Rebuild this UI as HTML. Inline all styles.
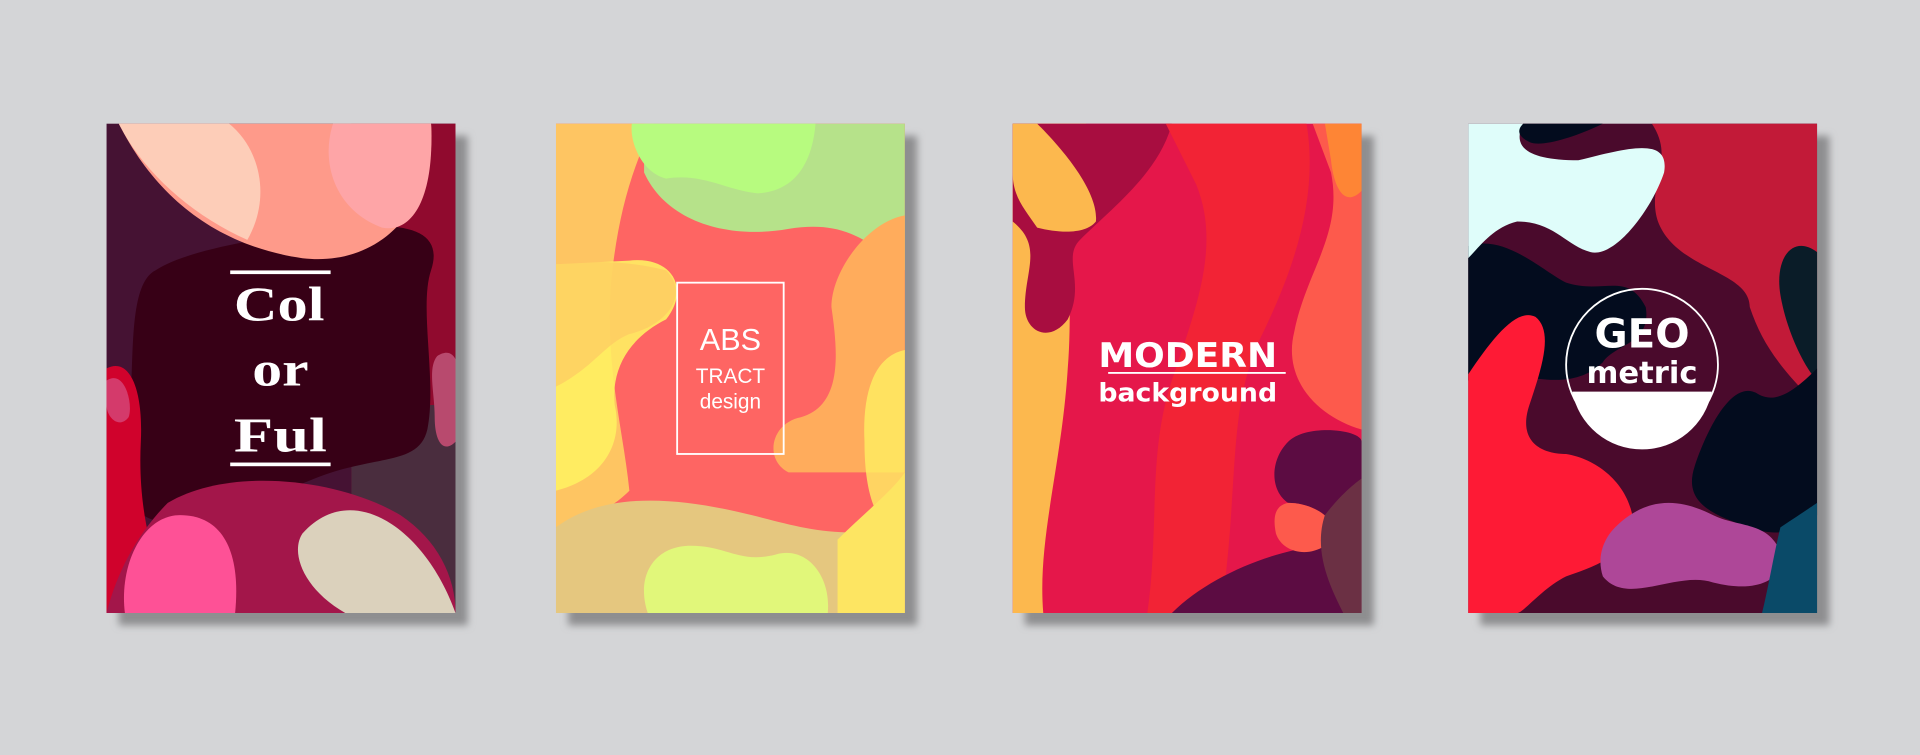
<!DOCTYPE html>
<html><head><meta charset="utf-8"><style>
html,body{margin:0;padding:0;background:#d4d5d7;overflow:hidden}
svg{display:block}
</style></head><body>
<svg width="1920" height="755" viewBox="0 0 1568 617" preserveAspectRatio="none" xmlns="http://www.w3.org/2000/svg">
<defs>
<filter id="b" x="-20%" y="-20%" width="140%" height="140%"><feGaussianBlur stdDeviation="3"/></filter>
<clipPath id="c"><rect x="0" y="0" width="285" height="400"/></clipPath>
</defs>
<rect width="1568" height="617" fill="#d4d5d7"/>
<g fill="#8e8e90" filter="url(#b)">
<rect x="97" y="111" width="285" height="400"/>
<rect x="464" y="111" width="285" height="400"/>
<rect x="837" y="111" width="285" height="400"/>
<rect x="1209" y="111" width="285" height="400"/>
</g>

<!-- Card 1 -->
<g transform="translate(87,101)" clip-path="url(#c)">
<rect width="285" height="400" fill="#451233"/>
<rect x="200" width="85" height="400" fill="#900a2e"/>
<rect x="200" y="230" width="85" height="170" fill="#4a2d3e"/>
<path d="M40 120 C20 130,22 180,20 220 C18 260,10 300,30 320 C60 340,120 310,170 290 C220 270,255 280,262 250 C270 210,255 150,265 120 C275 90,250 80,200 85 C150 90,70 100,40 120Z" fill="#370016"/>
<path d="M0 200 C20 190,30 220,28 260 C25 320,40 370,60 400 L0 400Z" fill="#d0022c"/>
<path d="M0 210 C15 200,22 230,18 240 C10 250,0 240,0 230Z" fill="#d43a6b"/>
<path d="M270 190 C285 180,290 200,285 210 L285 260 C275 270,268 260,268 240 C268 220,262 200,270 190Z" fill="#b84a6e"/>
<path d="M50 310 C100 280,190 290,240 320 C270 340,285 370,285 400 L0 400 C10 360,30 330,50 310Z" fill="#a3164a"/>
<path d="M15 400 C10 360,30 320,60 320 C95 320,110 350,105 400Z" fill="#fe5196"/>
<path d="M160 335 C200 290,260 330,285 400 L195 400 C160 380,150 350,160 335Z" fill="#dbd1bc"/>
<path d="M10 0 C40 60,90 100,160 110 C230 118,270 60,265 0Z" fill="#fe9a8a"/>
<path d="M10 0 C30 40,70 75,115 95 C135 60,125 20,100 0Z" fill="#fdcdb8"/>
<path d="M185 0 C175 30,185 70,225 85 C250 90,268 60,265 0Z" fill="#fea5a7"/>
<rect x="101" y="120" width="82" height="3" fill="#fff"/>
<rect x="101" y="277" width="82" height="3" fill="#fff"/>
<g font-family="Liberation Serif,DejaVu Serif,serif" font-weight="bold" fill="#fff" font-size="40">
<text x="104" y="161" textLength="74" lengthAdjust="spacingAndGlyphs">Col</text>
<text x="119" y="214" textLength="46" lengthAdjust="spacingAndGlyphs">or</text>
<text x="104" y="268" textLength="76" lengthAdjust="spacingAndGlyphs">Ful</text>
</g>
</g>

<!-- Card 2 -->
<g transform="translate(454,101)" clip-path="url(#c)">
<rect width="285" height="400" fill="#fe6563"/>
<path d="M0 0 L80 0 C60 40,50 80,45 130 C40 200,55 250,60 300 C40 320,10 330,0 330Z" fill="#fec562"/>
<path d="M0 115 L60 112 C95 108,110 135,90 160 C60 175,45 200,48 230 C55 260,40 290,0 300Z" fill="#fff062" opacity=".9"/>
<path d="M0 115 C30 112,60 112,90 120 C110 140,90 165,60 172 C40 180,30 200,0 215Z" fill="#fec562" opacity=".6"/>
<path d="M72 0 L285 0 L285 120 C250 90,230 80,190 86 C140 95,90 80,72 40Z" fill="#b6e28a"/>
<path d="M62 0 L212 0 C210 25,200 55,165 57 C140 55,120 40,90 45 C70 40,60 15,62 0Z" fill="#b7fb7f"/>
<path d="M285 75 C255 80,225 120,225 150 C230 185,235 230,200 240 C175 245,170 275,190 285 L285 285Z" fill="#ffac5c"/>
<path d="M285 185 C260 190,250 220,252 260 C252 300,260 330,285 340Z" fill="#fff062" opacity=".8"/>
<path d="M0 330 C40 300,100 305,160 320 C200 330,230 340,285 330 L285 400 L0 400Z" fill="#e5c77f"/>
<path d="M230 340 C250 320,275 300,285 285 L285 400 L230 400Z" fill="#fde562"/>
<path d="M75 400 C65 370,80 345,110 345 C140 345,150 360,180 352 C205 345,225 370,222 400Z" fill="#e1f77a"/>
<rect x="99" y="130" width="87" height="140" fill="none" stroke="#fff" stroke-width="1.5"/>
<g font-family="Liberation Sans,sans-serif" fill="#fff" text-anchor="middle">
<text x="142.5" y="185" font-size="25">ABS</text>
<text x="142.5" y="212" font-size="17">TRACT</text>
<text x="142.5" y="233" font-size="17">design</text>
</g>
</g>

<!-- Card 3 -->
<g transform="translate(827,101)" clip-path="url(#c)">
<rect width="285" height="400" fill="#e5174a"/>
<path d="M0 0 L60 0 C40 80,50 140,45 200 C40 280,20 340,25 400 L0 400Z" fill="#fcb84e"/>
<path d="M0 0 L130 0 C120 40,80 70,55 95 C40 110,60 130,45 160 C30 180,10 170,10 150 C10 120,25 100,0 80Z" fill="#a80d40"/>
<path d="M0 0 L20 0 C50 30,70 60,68 80 C60 90,40 90,20 85 C10 70,0 60,0 40Z" fill="#fcb84e"/>
<path d="M125 0 L240 0 C250 60,230 120,200 180 C175 240,185 300,170 400 L110 400 C120 330,110 270,130 210 C150 150,170 100,150 50Z" fill="#f22335"/>
<path d="M245 0 L285 0 L285 250 C250 240,220 210,230 170 C240 120,270 90,260 40Z" fill="#fd5a4c"/>
<path d="M255 0 L285 0 L285 55 C270 70,262 50,260 30Z" fill="#fe8535"/>
<path d="M225 260 C240 245,285 250,285 260 L285 400 L130 400 C160 370,210 350,250 345 C275 330,250 310,225 310 C210 300,210 275,225 260Z" fill="#5c0c42"/>
<path d="M225 310 C250 310,275 330,255 345 C240 355,220 350,215 335 C212 320,215 312,225 310Z" fill="#fd5a4c"/>
<path d="M255 320 C270 300,285 290,285 290 L285 400 L270 400 C260 380,245 350,255 320Z" fill="#6b3044"/>
<g font-family="DejaVu Sans,Liberation Sans,sans-serif" font-weight="bold" fill="#fff" text-anchor="middle">
<text x="143" y="199" font-size="28" textLength="146" lengthAdjust="spacingAndGlyphs">MODERN</text>
<rect x="78" y="203" width="145" height="1.5"/>
<text x="143" y="227" font-size="21" textLength="146" lengthAdjust="spacingAndGlyphs">background</text>
</g>
</g>

<!-- Card 4 -->
<g transform="translate(1199,101)" clip-path="url(#c)">
<rect width="285" height="400" fill="#4a0a2c"/>
<path d="M150 0 L285 0 L285 230 C255 200,240 180,230 150 C230 120,170 120,155 80 C145 50,170 30,150 0Z" fill="#c21a38"/>
<path d="M0 100 C30 90,60 120,80 130 C110 140,130 120,145 150 C150 180,120 180,110 195 C90 215,60 210,40 205 C20 200,0 210,0 210Z" fill="#030c1e"/>
<path d="M0 0 L45 0 C35 20,50 30,90 30 C130 20,165 10,160 40 C150 70,120 110,100 105 C80 100,70 80,40 80 C20 85,10 100,0 110Z" fill="#dffdfa"/>
<path d="M45 0 L110 0 C90 10,60 20,50 15 C40 10,40 5,45 0Z" fill="#030c1e"/>
<path d="M285 105 C265 90,250 110,255 140 C260 170,275 200,285 210Z" fill="#0a1c28"/>
<path d="M285 200 C265 220,250 230,235 220 C215 210,195 250,185 280 C175 310,200 320,230 330 C255 340,275 330,285 320Z" fill="#030c1e"/>
<path d="M0 205 C20 175,40 150,55 158 C70 170,60 200,50 230 C40 260,60 270,80 270 C110 275,135 300,135 330 C130 350,110 360,80 370 C60 380,45 400,40 400 L0 400Z" fill="#fe1a35"/>
<path d="M120 330 C150 300,180 310,200 320 C220 330,245 325,255 350 C260 370,240 385,200 375 C170 365,130 395,110 370 C105 355,110 340,120 330Z" fill="#ae4798"/>
<path d="M255 330 C270 320,285 310,285 310 L285 400 L240 400 C245 380,250 350,255 330Z" fill="#0a4a68"/>
<circle cx="142" cy="197" r="62" fill="none" stroke="#fff" stroke-width="1.5"/>
<path d="M85 219 L199 219 A58 58 0 0 1 85 219Z" fill="#fff"/>
<g font-family="DejaVu Sans,Liberation Sans,sans-serif" font-weight="bold" fill="#fff" text-anchor="middle">
<text x="142" y="183" font-size="33">GEO</text>
<text x="142" y="212" font-size="25">metric</text>
</g>
</g>
</svg>
</body></html>
